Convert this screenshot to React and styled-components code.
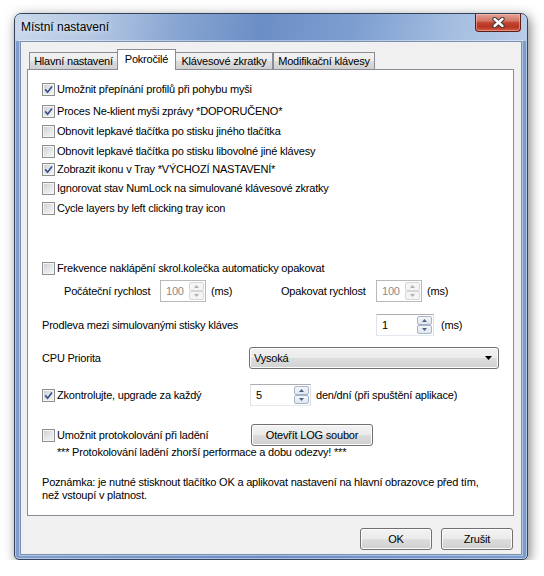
import React from "react";
import styled, { createGlobalStyle } from "styled-components";

const GlobalStyle = createGlobalStyle`
  body {
    margin: 0;
    background: #fff;
    font-family: "Liberation Sans", Arial, sans-serif;
    font-size: 11px;
    letter-spacing: -0.2px;
    color: #000;
  }
`;

const tabs = [
  { label: "Hlavní nastavení", w: 89 },
  { label: "Pokročilé", w: 59, active: true },
  { label: "Klávesové zkratky", w: 98 },
  { label: "Modifikační klávesy", w: 102 },
];

const App = () => {
  return (
    <>
      <GlobalStyle />
      <Window>
        <TitleBar>
          <Title>Místní nastavení</Title>
          <CloseButton>
            <svg width="13" height="11" viewBox="0 0 13 11">
              <path d="M2.5 2 L10.5 9 M10.5 2 L2.5 9" stroke="#3b3b3b" strokeWidth="4.4" strokeLinecap="round" />
              <path d="M2.5 2 L10.5 9 M10.5 2 L2.5 9" stroke="#fff" strokeWidth="2.4" strokeLinecap="round" />
            </svg>
          </CloseButton>
        </TitleBar>
        <Client>
          <TabStrip>
            {tabs.map((t) => (
              <Tab key={t.label} $w={t.w} $active={t.active}>
                {t.label}
              </Tab>
            ))}
          </TabStrip>
          <Panel>
            <Row>
              <CheckBox checked />
              <span>Umožnit přepínání profilů při pohybu myši</span>
            </Row>
            <Row $mt={9}>
              <CheckBox checked />
              <span>Proces Ne-klient myši zprávy *DOPORUČENO*</span>
            </Row>
            <Row $mt={7}>
              <CheckBox />
              <span>Obnovit lepkavé tlačítka po stisku jiného tlačítka</span>
            </Row>
            <Row $mt={7}>
              <CheckBox />
              <span>Obnovit lepkavé tlačítka po stisku libovolné jiné klávesy</span>
            </Row>
            <Row $mt={5}>
              <CheckBox checked />
              <span>Zobrazit ikonu v Tray *VÝCHOZÍ NASTAVENÍ*</span>
            </Row>
            <Row $mt={6}>
              <CheckBox />
              <span>Ignorovat stav NumLock na simulované klávesové zkratky</span>
            </Row>
            <Row $mt={7}>
              <CheckBox />
              <span>Cycle layers by left clicking tray icon</span>
            </Row>

            <Row $mt={47}>
              <CheckBox />
              <span>Frekvence naklápění skrol.kolečka automaticky opakovat</span>
            </Row>
            <Row $mt={5} $h={22}>
              <Cell $w={96} $ml={22}>Počáteční rychlost</Cell>
              <Spin value="100" w={46} disabled />
              <Cell $w={70} $ml={5}>(ms)</Cell>
              <Cell $w={95}>Opakovat rychlost</Cell>
              <Spin value="100" w={46} disabled />
              <Cell $ml={5}>(ms)</Cell>
            </Row>

            <Row $mt={12} $h={22}>
              <Cell $w={334}>Prodleva mezi simulovanými stisky kláves</Cell>
              <Spin value="1" w={58} />
              <Cell $ml={7}>(ms)</Cell>
            </Row>

            <Row $mt={11} $h={22}>
              <Cell $w={207}>CPU Priorita</Cell>
              <Combo>
                <span>Vysoká</span>
                <svg width="7" height="4" viewBox="0 0 7 4">
                  <path d="M0 0 H7 L3.5 4 Z" fill="#000" />
                </svg>
              </Combo>
            </Row>

            <Row $mt={15} $h={22}>
              <Cell $w={208}>
                <CheckBox checked />
                <span>Zkontrolujte, upgrade za každý</span>
              </Cell>
              <Spin value="5" w={61} />
              <Cell $ml={5}>den/dní (při spuštění aplikace)</Cell>
            </Row>

            <Row $mt={18} $h={22}>
              <Cell $w={209}>
                <CheckBox />
                <span>Umožnit protokolování při ladění</span>
              </Cell>
              <Button $w={122}>Otevřít LOG soubor</Button>
            </Row>
            <Row $ml={15}>*** Protokolování ladění zhorší performace a dobu odezvy! ***</Row>

            <Note>
              Poznámka: je nutné stisknout tlačítko OK a aplikovat nastavení na hlavní obrazovce před tím,
              <br />
              než vstoupí v platnost.
            </Note>
          </Panel>
          <ButtonBar>
            <Button $w={72}>OK</Button>
            <Button $w={72}>Zrušit</Button>
          </ButtonBar>
        </Client>
      </Window>
    </>
  );
};

const CheckBox = ({ checked }) => {
  return (
    <Box>
      {checked && (
        <svg width="9" height="9" viewBox="0 0 9 9">
          <path d="M1.2 4.4 L3.6 7.2 L8 1.4" fill="none" stroke="#3b4f8f" strokeWidth="1.7" />
        </svg>
      )}
    </Box>
  );
};

const Spin = ({ value, w, disabled }) => {
  return (
    <SpinBox $w={w} $disabled={disabled}>
      <SpinText $disabled={disabled}>{value}</SpinText>
      <SpinButtons>
        <SpinBtn $disabled={disabled}>
          <svg width="5" height="3" viewBox="0 0 5 3">
            <path d="M0 3 H5 L2.5 0 Z" fill={disabled ? "#b0b0b0" : "#4d6185"} />
          </svg>
        </SpinBtn>
        <SpinBtn $disabled={disabled}>
          <svg width="5" height="3" viewBox="0 0 5 3">
            <path d="M0 0 H5 L2.5 3 Z" fill={disabled ? "#b0b0b0" : "#4d6185"} />
          </svg>
        </SpinBtn>
      </SpinButtons>
    </SpinBox>
  );
};

const Window = styled.div`
  box-sizing: border-box;
  width: 514px;
  height: 547px;
  margin: 13px 0 0 14px;
  border: 1px solid #34445c;
  border-radius: 7px 7px 5px 5px;
  background: linear-gradient(to right, #7f9ecd, #6a8dc3 50%, #7b9ccf);
  box-shadow: 2px 3px 12px rgba(0, 0, 0, 0.5), inset 0 0 0 1px rgba(255, 255, 255, 0.45);
  display: flex;
  flex-direction: column;
  overflow: hidden;
`;

const TitleBar = styled.div`
  height: 27px;
  flex-shrink: 0;
  display: flex;
  align-items: flex-start;
  padding: 0 6px;
  background: linear-gradient(
    100deg,
    #cad8eb 0%,
    #b3c7e3 16%,
    #87a5d2 32%,
    #6b8ec6 48%,
    #7d9ed0 66%,
    #a6bfe1 86%,
    #b9cce7 100%
  );
`;

const Title = styled.div`
  padding-top: 6px;
  font-size: 12px;
  line-height: 15px;
  letter-spacing: 0;
  text-shadow: 0 0 6px rgba(255, 255, 255, 0.9);
`;

const CloseButton = styled.div`
  box-sizing: border-box;
  margin-left: auto;
  width: 46px;
  height: 18px;
  border: 1px solid #5a1c14;
  border-top: none;
  border-radius: 0 0 4px 4px;
  background: linear-gradient(#e3a396 0%, #d47766 40%, #c2432f 52%, #b83522 75%, #cf5c43 100%);
  box-shadow: inset 0 0 0 1px rgba(255, 200, 190, 0.5);
  display: flex;
  align-items: center;
  justify-content: center;
`;

const Client = styled.div`
  flex: 1;
  margin: 0 5px 4px;
  background: #f0f0f0;
  border: 1px solid #7c90b1;
  box-shadow: 0 0 0 1px rgba(255, 255, 255, 0.4);
  padding: 7px 7px 0 6px;
  display: flex;
  flex-direction: column;
`;

const TabStrip = styled.div`
  height: 20px;
  flex-shrink: 0;
  display: flex;
  align-items: flex-start;
  padding-left: 2px;
  position: relative;
  z-index: 1;
`;

const Tab = styled.div`
  box-sizing: border-box;
  width: ${(p) => p.$w}px;
  height: ${(p) => (p.$active ? 21 : 17)}px;
  margin-top: ${(p) => (p.$active ? 0 : 3)}px;
  margin-left: ${(p) => (p.$active ? -1 : 0)}px;
  margin-right: ${(p) => (p.$active ? -1 : 0)}px;
  border: 1px solid #898c95;
  border-bottom: none;
  background: ${(p) =>
    p.$active ? "#fff" : "linear-gradient(#f2f2f2 0%, #ebebeb 50%, #dddddd 51%, #cfcfcf 100%)"};
  position: relative;
  z-index: ${(p) => (p.$active ? 2 : 1)};
  display: flex;
  justify-content: center;
  align-items: ${(p) => (p.$active ? "flex-start" : "center")};
  padding-top: ${(p) => (p.$active ? 3 : 0)}px;
  line-height: 13px;
  white-space: nowrap;
`;

const Panel = styled.div`
  box-sizing: border-box;
  height: 447px;
  flex-shrink: 0;
  background: #fff;
  border: 1px solid #898c95;
  padding: 13px 0 0 14px;
`;

const Row = styled.div`
  display: flex;
  align-items: center;
  height: ${(p) => p.$h || 13}px;
  margin-top: ${(p) => p.$mt || 0}px;
  margin-left: ${(p) => p.$ml || 0}px;
  line-height: 13px;
  white-space: nowrap;
`;

const Cell = styled.div`
  display: flex;
  align-items: center;
  width: ${(p) => (p.$w ? `${p.$w}px` : "auto")};
  margin-left: ${(p) => p.$ml || 0}px;
  flex-shrink: 0;
  white-space: nowrap;
`;

const Box = styled.span`
  box-sizing: border-box;
  width: 13px;
  height: 13px;
  flex-shrink: 0;
  margin-right: 2px;
  border: 1px solid #8e8f8f;
  background: linear-gradient(135deg, #c9cdd3 0%, #e6e7e9 55%, #f7f7f7 100%);
  box-shadow: inset 0 0 0 1px #f4f4f4;
  display: flex;
  align-items: center;
  justify-content: center;
`;

const SpinBox = styled.div`
  box-sizing: border-box;
  width: ${(p) => p.$w}px;
  height: 22px;
  flex-shrink: 0;
  border: 1px solid;
  border-color: ${(p) => (p.$disabled ? "#b9b9b9" : "#abadb3 #dbdfe6 #e3e9ef #e2e3ea")};
  background: #fff;
  display: flex;
  padding: 1px 1px 1px 0;
`;

const SpinText = styled.div`
  flex: 1;
  padding-left: 5px;
  line-height: 18px;
  color: ${(p) => (p.$disabled ? "#8a8a8a" : "#000")};
`;

const SpinButtons = styled.div`
  width: 15px;
  display: flex;
  flex-direction: column;
`;

const SpinBtn = styled.div`
  box-sizing: border-box;
  flex: 1;
  border: 1px solid ${(p) => (p.$disabled ? "#d6d6d6" : "#a7b3c8")};
  border-radius: 2px;
  background: ${(p) => (p.$disabled ? "#f4f4f4" : "linear-gradient(#f3f6fa, #dfe6ef)")};
  display: flex;
  align-items: center;
  justify-content: center;
`;

const Combo = styled.div`
  box-sizing: border-box;
  width: 250px;
  height: 22px;
  border: 1px solid #707070;
  border-radius: 3px;
  background: linear-gradient(#f2f2f2 0%, #ebebeb 50%, #dddddd 51%, #d2d2d2 100%);
  box-shadow: inset 0 0 0 1px #fcfcfc;
  display: flex;
  align-items: center;
  justify-content: space-between;
  padding: 0 6px 0 4px;
`;

const Button = styled.div`
  box-sizing: border-box;
  width: ${(p) => p.$w}px;
  height: 22px;
  flex-shrink: 0;
  border: 1px solid #707070;
  border-radius: 3px;
  background: linear-gradient(#f2f2f2 0%, #ebebeb 50%, #dddddd 51%, #cfcfcf 100%);
  box-shadow: inset 0 0 0 1px #fcfcfc;
  display: flex;
  align-items: center;
  justify-content: center;
`;

const Note = styled.p`
  margin: 17px 0 0;
  line-height: 13px;
`;

const ButtonBar = styled.div`
  display: flex;
  justify-content: flex-end;
  gap: 9px;
  margin-top: 12px;
  padding-right: 1px;
`;

export default App;
